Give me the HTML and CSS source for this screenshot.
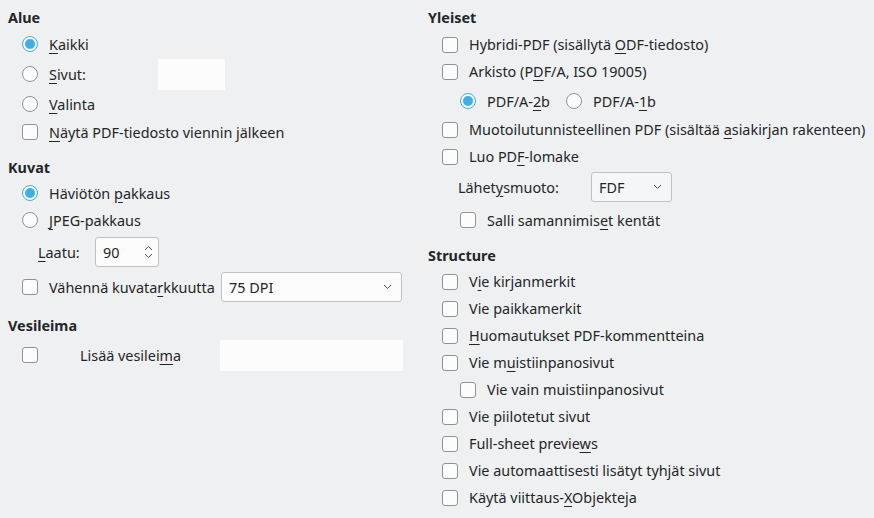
FILE: index.html
```html
<!DOCTYPE html>
<html lang="fi">
<head>
<meta charset="utf-8">
<title>PDF-asetukset</title>
<link rel="stylesheet" href="styles.css">
</head>
<body>
<div class="page">
  <div class="col left">
    <div class="heading h-first">Alue</div>
    <div class="row h28"><span class="radio checked"></span><span class="lbl"><u>K</u>aikki</span></div>
    <div class="row h32"><span class="radio"></span><span class="lbl w-sivut"><u>S</u>ivut:</span><span class="field f-sivut"></span></div>
    <div class="row h28"><span class="radio"></span><span class="lbl"><u>V</u>alinta</span></div>
    <div class="row h28"><span class="check"></span><span class="lbl"><u>N</u>äytä PDF-tiedosto viennin jälkeen</span></div>

    <div class="heading h-kuvat">Kuvat</div>
    <div class="row h28"><span class="radio checked"></span><span class="lbl">Häviötön <u>p</u>akkaus</span></div>
    <div class="row h26"><span class="radio"></span><span class="lbl"><u>J</u>PEG-pakkaus</span></div>
    <div class="row h32 mt3 ind2"><span class="lbl w-laatu"><u>L</u>aatu:</span>
      <span class="spin"><span class="spin-val">90</span>
        <svg class="spin-arr" width="9" height="16" viewBox="0 0 9 16"><path d="M1 6 L4.5 2.5 L8 6" fill="none" stroke="#4d5052" stroke-width="1"/><path d="M1 10 L4.5 13.5 L8 10" fill="none" stroke="#4d5052" stroke-width="1"/></svg>
      </span>
    </div>
    <div class="row h32 mt3"><span class="check"></span><span class="lbl w-vahenna">Vähennä kuvata<u>r</u>kkuutta</span>
      <span class="combo c-dpi"><span class="combo-val">75 DPI</span>
        <svg class="chev" width="9" height="6" viewBox="0 0 9 6"><path d="M1 1 L4.5 4.5 L8 1" fill="none" stroke="#4d5052" stroke-width="1"/></svg>
      </span>
    </div>

    <div class="heading h-vesi">Vesileima</div>
    <div class="row h32 mt2"><span class="check"></span><span class="lbl w-lisaa">Lisää vesilei<u>m</u>a</span><span class="field f-vesi"></span></div>
  </div>

  <div class="col right">
    <div class="heading h-first">Yleiset</div>
    <div class="row h27 mt1"><span class="check"></span><span class="lbl">Hybridi-PDF (sisällytä <u>O</u>DF-tiedosto)</span></div>
    <div class="row h27"><span class="check"></span><span class="lbl">Arkisto (P<u>D</u>F/A, ISO 19005)</span></div>
    <div class="row h30 mt1 ind1"><span class="radio checked"></span><span class="lbl w-pdfa">PDF/A-<u>2</u>b</span><span class="radio"></span><span class="lbl">PDF/A-<u>1</u>b</span></div>
    <div class="row h27"><span class="check"></span><span class="lbl">Muotoilutunnisteellinen PDF (sisältää <u>a</u>siakirjan rakenteen)</span></div>
    <div class="row h27"><span class="check"></span><span class="lbl">Luo PD<u>F</u>-lomake</span></div>
    <div class="row h34 ind2"><span class="lbl w-lahetys">Lähet<u>y</u>smuoto:</span>
      <span class="combo c-fdf"><span class="combo-val">FDF</span>
        <svg class="chev" width="9" height="6" viewBox="0 0 9 6"><path d="M1 1 L4.5 4.5 L8 1" fill="none" stroke="#4d5052" stroke-width="1"/></svg>
      </span>
    </div>
    <div class="row h28 mt2 ind1"><span class="check"></span><span class="lbl">Salli samannimis<u>e</u>t kentät</span></div>

    <div class="heading h-struct">Structure</div>
    <div class="row h27 mt1"><span class="check"></span><span class="lbl">V<u>i</u>e kirjanmerkit</span></div>
    <div class="row h27"><span class="check"></span><span class="lbl">Vie paikkamerkit</span></div>
    <div class="row h27"><span class="check"></span><span class="lbl"><u>H</u>uomautukset PDF-kommentteina</span></div>
    <div class="row h27"><span class="check"></span><span class="lbl">Vie m<u>u</u>istiinpanosivut</span></div>
    <div class="row h27 ind1"><span class="check"></span><span class="lbl">Vie vain muistiinpanosivut</span></div>
    <div class="row h27"><span class="check"></span><span class="lbl">Vie piilotetut sivut</span></div>
    <div class="row h27"><span class="check"></span><span class="lbl">Full-sheet previe<u>w</u>s</span></div>
    <div class="row h27"><span class="check"></span><span class="lbl">Vie automaattisesti lisätyt tyhjät sivut</span></div>
    <div class="row h27"><span class="check"></span><span class="lbl">Käytä viittaus-<u>X</u>Objekteja</span></div>
  </div>
</div>
</body>
</html>
```

FILE: styles.css
```css
html, body {
  margin: 0;
  padding: 0;
  background: #eff0f1;
}
body {
  font-family: "Noto Sans", "Open Sans", sans-serif;
  font-size: 14.4px;
  color: #232629;
  width: 874px;
  height: 518px;
  overflow: hidden;
}
.page {
  display: flex;
  padding: 4px 0 0 8px;
}
.col {
  display: flex;
  flex-direction: column;
}
.left { width: 395px; }
.right { margin-left: 25px; }

.heading {
  font-weight: bold;
  height: 24px;
  display: flex;
  align-items: center;
}
.h-first { height: 26px; }
.h-kuvat { margin-top: 9px; }
.h-vesi { margin-top: 10px; }
.h-struct { margin-top: 9px; }

.row {
  display: flex;
  align-items: center;
  padding-left: 14px;
  white-space: nowrap;
}
.ind1 { padding-left: 32px; }
.ind2 { padding-left: 30px; }
.h26 { height: 26px; }
.h27 { height: 27px; }
.h28 { height: 28px; }
.h30 { height: 30px; }
.h32 { height: 32px; }
.h34 { height: 34px; }
.mt1 { margin-top: 1px; }
.mt2 { margin-top: 2px; }
.mt3 { margin-top: 3px; }

u {
  text-decoration: underline;
  text-decoration-thickness: 1px;
  text-underline-offset: 3px;
}

.check, .radio {
  flex: none;
  width: 16px;
  height: 16px;
  box-sizing: border-box;
  border: 1px solid #8f9193;
  background: #fcfcfc;
  margin-right: 11px;
}
.check { border-radius: 3px; }
.radio { border-radius: 50%; position: relative; }
.radio.checked {
  border-color: #3daee9;
  background: #fcfcfc;
}
.radio.checked::after {
  content: "";
  position: absolute;
  left: 2px;
  top: 2px;
  width: 10px;
  height: 10px;
  border-radius: 50%;
  background: #3daee9;
}

.w-sivut { width: 109px; }
.w-laatu { width: 57px; }
.w-vahenna { width: 172px; }
.w-lisaa { width: 140px; margin-left: 31px; }
.w-pdfa { width: 79px; }
.w-lahetys { width: 133px; }

.field {
  display: block;
  background: #fcfcfc;
  height: 31px;
}
.f-sivut { width: 67px; }
.f-vesi { width: 183px; }

.spin {
  box-sizing: border-box;
  width: 64px;
  height: 30px;
  border: 1px solid #bfc1c3;
  border-radius: 3px;
  background: #fcfcfc;
  display: flex;
  align-items: center;
  padding-left: 7px;
  padding-right: 5px;
}
.spin-val { flex: 1; }
.spin-arr { display: block; }

.combo {
  box-sizing: border-box;
  height: 30px;
  border: 1px solid #bfc1c3;
  border-radius: 3px;
  display: flex;
  align-items: center;
  padding-left: 7px;
  padding-right: 9px;
}
.combo-val { flex: 1; }
.chev { display: block; }
.c-dpi { width: 181px; background: #fcfcfc; }
.c-fdf { width: 81px; background: #f5f6f7; }
```
